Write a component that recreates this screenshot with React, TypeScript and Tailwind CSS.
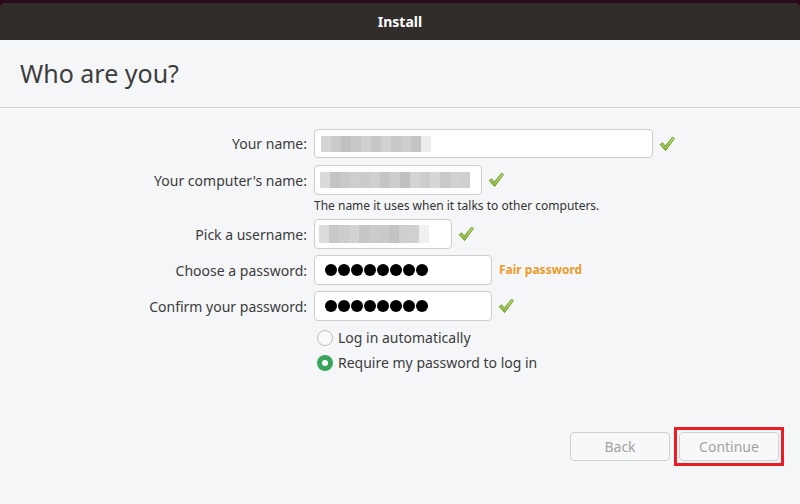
import React from "react";

const font = { fontFamily: '"Noto Sans", "Open Sans", sans-serif' };

function Check() {
  return (
    <svg width="18" height="18" viewBox="0 0 18 18" className="ml-[5px] shrink-0">
      <defs>
        <linearGradient id="cg" x1="0" y1="0" x2="0" y2="1">
          <stop offset="0" stopColor="#c2e07a" />
          <stop offset="1" stopColor="#86b43a" />
        </linearGradient>
      </defs>
      <path
        d="M2.2 9.6 L4.6 7.8 L7.2 11.2 L14.6 2.2 L16.4 3.6 L7.6 15.6 Z"
        fill="url(#cg)"
        stroke="#6f9c2c"
        strokeWidth="1"
        strokeLinejoin="round"
      />
    </svg>
  );
}

function Blur({ shades, h = 16 }: { shades: string[]; h?: number }) {
  return (
    <div className="flex">
      {shades.map((c, i) => (
        <div key={i} className="w-[10px]" style={{ background: c, height: h }} />
      ))}
    </div>
  );
}

function Dots() {
  return (
    <div className="flex gap-[1px] pl-[10px]">
      {Array.from({ length: 8 }).map((_, i) => (
        <div key={i} className="w-[12px] h-[12px] rounded-full bg-black" />
      ))}
    </div>
  );
}

function Row({
  label,
  children,
  mt,
}: {
  label: string;
  children: React.ReactNode;
  mt: string;
}) {
  return (
    <div className={`flex items-center ${mt}`}>
      <div className="w-[308px] text-right text-[14px] text-[#3c3c3c] pr-[1px]">{label}</div>
      <div className="ml-[6px] flex items-center">{children}</div>
    </div>
  );
}

export default function App() {
  return (
    <div className="w-[800px] h-[504px] bg-[#2c0b1f] flex flex-col overflow-hidden" style={font}>
      <div className="h-[3px]" />
      <div className="h-[37px] bg-[#302d2b] rounded-t-[5px] flex items-center justify-center text-white text-[14px] font-bold">
        Install
      </div>
      <div className="flex-1 bg-[#f5f6f7] flex flex-col">
        <div className="h-[68px] border-b border-[#d6d6d6] flex items-center pl-[20px] text-[25px] text-[#3d3d3d]">
          Who are you?
        </div>
        <div className="flex flex-col pt-[21px]">
          <Row label="Your name:" mt="">
            <div className="w-[339px] h-[29px] bg-white border border-[#cdcdcd] rounded-[4px] flex items-center pl-[6px]">
              <Blur
                shades={["#d4d4d4", "#cbcbcb", "#c0c0c0", "#c9c9c9", "#cfcfcf", "#c6c6c6", "#d2d2d2", "#c8c8c8", "#cdcdcd", "#c4c4c4", "#ebecec"]}
              />
            </div>
            <Check />
          </Row>
          <Row label="Your computer's name:" mt="mt-[7px]">
            <div className="w-[168px] h-[30px] bg-white border border-[#cdcdcd] rounded-[4px] flex items-center pl-[5px]">
              <Blur
                shades={["#dadada", "#c4c4c4", "#c9c9c9", "#cecece", "#cbcbcb", "#d0d0d0", "#c5c5c5", "#cccccc", "#c0c0c0", "#d3d3d3", "#cdcdcd", "#d6d6d6", "#cacaca", "#d1d1d1", "#cfcfcf"]}
              />
            </div>
            <Check />
          </Row>
          <div className="pl-[314px] mt-[2px] text-[12px] text-[#333333]">
            The name it uses when it talks to other computers.
          </div>
          <Row label="Pick a username:" mt="mt-[4px]">
            <div className="w-[138px] h-[30px] bg-white border border-[#cdcdcd] rounded-[4px] flex items-center pl-[4px]">
              <Blur
                shades={["#dcdcdc", "#c8c8c8", "#cdcdcd", "#d2d2d2", "#c6c6c6", "#cbcbcb", "#c9c9c9", "#c3c3c3", "#cfcfcf", "#d0d0d0", "#f0f0f0"]}
                h={18}
              />
            </div>
            <Check />
          </Row>
          <Row label="Choose a password:" mt="mt-[6px]">
            <div className="w-[178px] h-[30px] bg-white border border-[#cdcdcd] rounded-[4px] flex items-center">
              <Dots />
            </div>
            <div className="ml-[7px] text-[12px] font-bold text-[#eb9b2a]">Fair password</div>
          </Row>
          <Row label="Confirm your password:" mt="mt-[6px]">
            <div className="w-[178px] h-[30px] bg-white border border-[#cdcdcd] rounded-[4px] flex items-center">
              <Dots />
            </div>
            <Check />
          </Row>
          <div className="pl-[317px] mt-[6px] flex items-center gap-[5px] text-[14px] text-[#3c3c3c]">
            <div className="w-[16px] h-[16px] rounded-full border border-[#bdbdbd] bg-[#fafafa]" />
            <span>Log in automatically</span>
          </div>
          <div className="pl-[317px] mt-[4px] flex items-center gap-[5px] text-[14px] text-[#3c3c3c]">
            <div className="w-[16px] h-[16px] rounded-full bg-[#3ba55c] flex items-center justify-center">
              <div className="w-[6px] h-[6px] rounded-full bg-white" />
            </div>
            <span>Require my password to log in</span>
          </div>
        </div>
        <div className="mt-auto mb-[38px] flex justify-end pr-[16px] gap-[4px] items-center">
          <div className="w-[100px] h-[29px] border border-[#cfcfcf] bg-[#f7f8f8] rounded-[4px] flex items-center justify-center text-[14px] text-[#a3a3a3]">
            Back
          </div>
          <div className="border-[3px] border-[#ec1c24] p-[2px]">
            <div className="w-[100px] h-[29px] border border-[#cfcfcf] bg-[#f7f8f8] rounded-[4px] flex items-center justify-center text-[14px] text-[#a3a3a3]">
              Continue
            </div>
          </div>
        </div>
      </div>
    </div>
  );
}
